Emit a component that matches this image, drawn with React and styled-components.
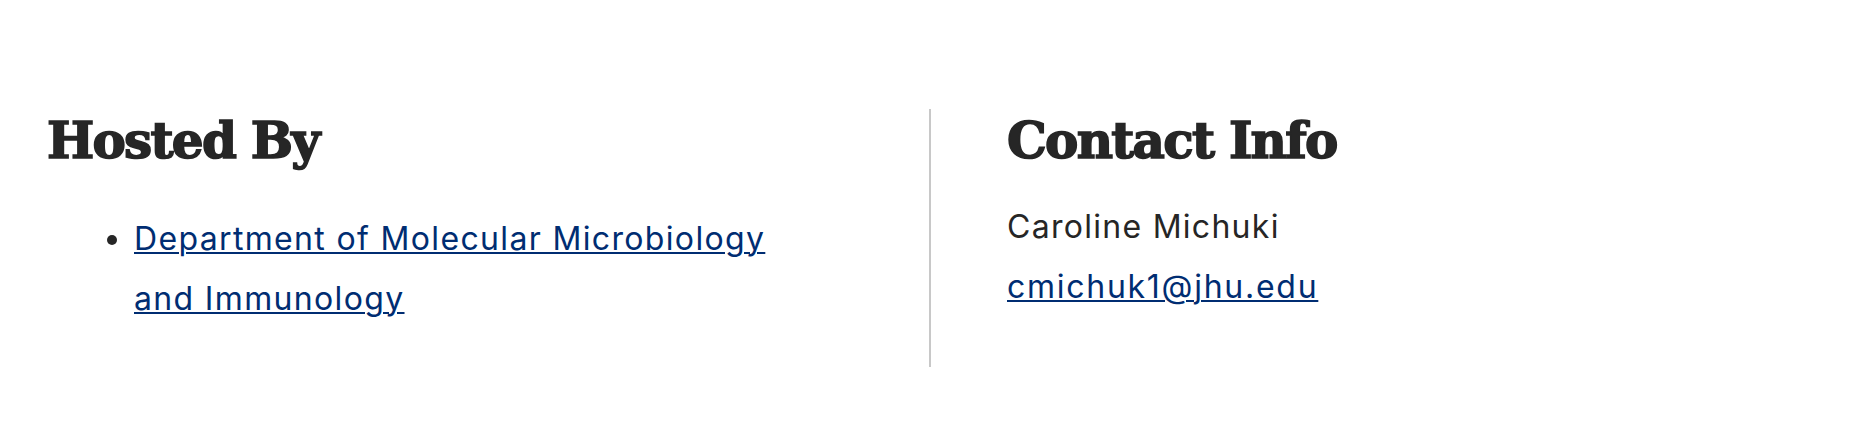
import React from 'react'
import styled, { createGlobalStyle } from 'styled-components'

const GlobalStyle = createGlobalStyle`
  body {
    margin: 0;
    background: #ffffff;
    font-family: Inter, 'Open Sans', sans-serif;
    color: #262626;
  }
`

const Section = styled.section`
  display: flex;
  padding: 109px 47px 74px;
`

const Column = styled.div`
  box-sizing: border-box;
  width: 50%;
  ${p => p.divided && `
    border-left: 2px solid #c8c8c8;
    padding-left: 76px;
  `}
`

const H2 = styled.h2`
  margin: 0;
  padding-top: 7px;
  font-family: 'DejaVu Serif', serif;
  font-weight: 700;
  font-size: 50px;
  line-height: 1;
  letter-spacing: -0.035em;
  color: #262626;
  -webkit-text-stroke: 1.6px #262626;
`

const Ul = styled.ul`
  margin: 43px 0 38px;
  padding-left: 87px;
  max-width: 670px;
`

const Li = styled.li`
  font-size: 32px;
  line-height: 60px;
  letter-spacing: 0.042em;
`

const A = styled.a`
  color: #002d72;
  text-decoration: underline;
  text-decoration-thickness: 2px;
  text-underline-offset: 2px;
`

const P = styled.p`
  margin: 0;
  font-size: 32px;
  line-height: 60px;
  letter-spacing: ${p => (p.link ? '0.054em' : '0.04em')};
  &:first-of-type {
    margin-top: 31px;
  }
`

export default function App() {
  return (
    <>
      <GlobalStyle />
      <Section>
        <Column>
          <H2>Hosted By</H2>
          <Ul>
            <Li>
              <A href='#'>Department of Molecular Microbiology and Immunology</A>
            </Li>
          </Ul>
        </Column>
        <Column divided>
          <H2>Contact Info</H2>
          <P>Caroline Michuki</P>
          <P link><A href='mailto:cmichuk1@jhu.edu'>cmichuk1@jhu.edu</A></P>
        </Column>
      </Section>
    </>
  )
}
